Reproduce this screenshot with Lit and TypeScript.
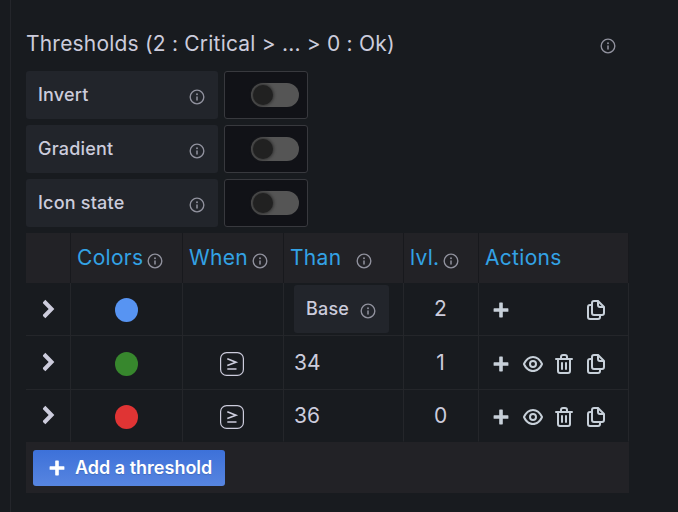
import { LitElement, html, css, svg, nothing } from "lit";
import { customElement, property } from "lit/decorators.js";

const ICONS: Record<string, string> = {
  info: "M12,2A10,10,0,1,0,22,12,10,10,0,0,0,12,2Zm0,18.2A8.2,8.2,0,1,1,20.2,12,8.2,8.2,0,0,1,12,20.200ZM12,11a1,1,0,0,0-1,1v4a1,1,0,0,0,2,0V12A1,1,0,0,0,12,11Zm0-4a1.250,1.250,0,1,0,1.250,1.250A1.250,1.250,0,0,0,12,7Z",
  eye: "M21.920,11.600C19.900,6.910,16.100,4,12,4S4.100,6.910,2.080,11.600a1,1,0,0,0,0,.8C4.100,17.090,7.900,20,12,20s7.900-2.910,9.920-7.600A1,1,0,0,0,21.920,11.600ZM12,18c-3.170,0-6.170-2.290-7.900-6C5.830,8.290,8.830,6,12,6s6.170,2.290,7.900,6C18.170,15.710,15.170,18,12,18ZM12,8a4,4,0,1,0,4,4A4,4,0,0,0,12,8Zm0,6a2,2,0,1,1,2-2A2,2,0,0,1,12,14Z",
  trash: "M10,18a1,1,0,0,0,1-1V11a1,1,0,0,0-2,0v6A1,1,0,0,0,10,18ZM20,6H16V5a3,3,0,0,0-3-3H11A3,3,0,0,0,8,5V6H4A1,1,0,0,0,4,8H5V19a3,3,0,0,0,3,3h8a3,3,0,0,0,3-3V8h1a1,1,0,0,0,0-2ZM10,5a1,1,0,0,1,1-1h2a1,1,0,0,1,1,1V6H10Zm7,14a1,1,0,0,1-1,1H8a1,1,0,0,1-1-1V8H17Zm-3-1a1,1,0,0,0,1-1V11a1,1,0,0,0-2,0v6A1,1,0,0,0,14,18Z",
  copy: "M21,8.940a1.310,1.310,0,0,0-.06-.27l0-.09a1.070,1.070,0,0,0-.19-.28h0l-6-6h0a1.070,1.070,0,0,0-.28-.19.320.320,0,0,0-.09,0A.88.88,0,0,0,14.050,2H10A3,3,0,0,0,7,5V6H6A3,3,0,0,0,3,9V19a3,3,0,0,0,3,3h8a3,3,0,0,0,3-3V18h1a3,3,0,0,0,3-3V9S21,9,21,8.940ZM15,5.410,17.590,8H16a1,1,0,0,1-1-1ZM15,19a1,1,0,0,1-1,1H6a1,1,0,0,1-1-1V9A1,1,0,0,1,6,8H7v7a3,3,0,0,0,3,3h5Zm4-4a1,1,0,0,1-1,1H10a1,1,0,0,1-1-1V5a1,1,0,0,1,1-1h3V7a3,3,0,0,0,3,3h3Z",
  plus: "M10.200,5.200a.6.6,0,0,1,.6-.6h2.400a.6.6,0,0,1,.6.6v5h5a.6.6,0,0,1,.6.6v2.400a.6.6,0,0,1-.6.6h-5v5a.6.6,0,0,1-.6.6h-2.400a.6.6,0,0,1-.6-.6v-5h-5a.6.6,0,0,1-.6-.6v-2.400a.6.6,0,0,1,.6-.6h5Z",
  chevron: "M7.600,4.500 L10.200,2 L20,12 L10.200,22 L7.600,19.500 L7.600,18.300 L13.800,12 L7.600,5.700Z",
};

@customElement("ui-icon")
class UiIcon extends LitElement {
  @property() name = "info";
  static styles = css`
    :host { display: block; flex: none; width: 24px; height: 24px; }
    svg { display: block; width: 100%; height: 100%; fill: currentColor; }
  `;
  render() {
    return html`<svg viewBox="0 0 24 24">${svg`<path d=${ICONS[this.name]}></path>`}</svg>`;
  }
}

interface Threshold { color: string; value?: string; level: string; }

const THRESHOLDS: Threshold[] = [
  { color: "#5794f2", level: "2" },
  { color: "#37872d", value: "34", level: "1" },
  { color: "#e03434", value: "36", level: "0" },
];

@customElement("app-root")
export class AppRoot extends LitElement {
  static styles = css`
    :host {
      display: block; box-sizing: border-box; height: 512px; overflow: hidden;
      background: #181b1f; color: #ccccdc;
      font: 400 21px/32px Inter, "Liberation Sans", sans-serif;
    }
    * { box-sizing: border-box; }
    .panel { height: 100%; margin-left: 10px; border-left: 1px solid #24262b; padding: 28px 49px 0 15px; }
    .title { display: flex; align-items: center; justify-content: space-between; height: 32px; margin-bottom: 11px; padding-right: 12px; letter-spacing: 0.2px; }
    .title .info { margin-top: 4px; }
    .info { width: 18px; height: 18px; color: #91929e; }
    .option { display: flex; gap: 6px; height: 48px; margin-bottom: 6px; }
    .label { display: flex; align-items: center; justify-content: space-between; background: #22252b; border-radius: 3px; padding: 0 12px; font-size: 18px; font-weight: 500; letter-spacing: 0.2px; }
    .label .info { margin-top: 3px; }
    .option .label { width: 192px; }
    .switch { display: flex; align-items: center; justify-content: flex-end; width: 84px; padding-right: 8px; background: #111217; border: 1px solid #38393e; border-radius: 3px; }
    .track { width: 48px; height: 24px; border-radius: 12px; background: #555; padding: 2px; }
    .knob { width: 20px; height: 20px; border-radius: 50%; background: #212121; box-shadow: 0 0 3px 1px #333; }
    .grid { display: grid; grid-template-columns: 45px 112px 101px 120px 75px 150px; grid-template-rows: 50px 53px 54px 52px 51px; width: 603px; }
    .cell { display: flex; align-items: center; justify-content: center; border-right: 1px solid #24262a; border-bottom: 1px solid #24262a; }
    .last { border-bottom-color: transparent; }
    .head { justify-content: flex-start; padding-left: 6px; background: #222226; color: #33a2e5; border-right-color: #18191d; border-bottom: 0; letter-spacing: 0.3px; }
    .head .info { margin: 5px 0 0 3px; }
    .head .spaced { margin-left: 14px; }
    .dot { width: 23px; height: 24px; border-radius: 50%; margin: 2px 1px 0 0; }
    .toggle { width: 22px; height: 22px; margin: 0 3px 1px 0; }
    .op { display: block; width: 24px; height: 24px; margin: 2px 2px 0 0; fill: none; stroke: #ccccdc; }
    .value { justify-content: flex-start; padding-left: 10px; }
    .base { width: 95px; height: 48px; }
    .level { padding-right: 1px; }
    .actions { display: grid; grid-template-columns: repeat(4, 24px); justify-content: start; gap: 7.600px; padding: 2px 0 0 10px; color: #c7d0d9; }
    .copy { grid-column: 4; }
    .foot { grid-column: 1 / -1; background: #222226; padding: 8px 7px; }
    .add { display: flex; align-items: center; gap: 6px; width: 192px; height: 36px; padding: 0 0 0 12px; border: 0; border-radius: 3px; background: linear-gradient(#3d71d9, #5785e0); color: #fff; font: 600 18px/36px Inter, "Liberation Sans", sans-serif; text-shadow: 0 1px 1px rgba(0,0,0,.15); white-space: nowrap; }
  `;

  private info(extra = "") {
    return html`<ui-icon class="info ${extra}" name="info"></ui-icon>`;
  }

  private row(t: Threshold, last: boolean) {
    const edge = last ? "last" : "";
    return html`
      <div class="cell ${edge}"><ui-icon class="toggle" name="chevron"></ui-icon></div>
      <div class="cell ${edge}"><span class="dot" style="background:${t.color}"></span></div>
      <div class="cell ${edge}">${t.value
        ? html`<svg class="op" viewBox="0 0 24 24"><rect x=".6" y=".6" width="22.800" height="22.800" rx="6" stroke-width="1.200"></rect><path d="M7.300 6.800L16 10.200L7.300 13.600M7.300 17H16.500" stroke-width="1.600"></path></svg>`
        : nothing}</div>
      <div class="cell value ${edge}">${t.value ?? html`<div class="label base">Base ${this.info()}</div>`}</div>
      <div class="cell level ${edge}">${t.level}</div>
      <div class="cell actions ${edge}">
        <ui-icon name="plus"></ui-icon>
        ${t.value ? html`<ui-icon name="eye"></ui-icon><ui-icon name="trash"></ui-icon>` : nothing}
        <ui-icon class="copy" name="copy"></ui-icon>
      </div>`;
  }

  render() {
    return html`<div class="panel">
      <div class="title"><span>Thresholds (2 : Critical &gt; ... &gt; 0 : Ok)</span>${this.info()}</div>
      ${["Invert", "Gradient", "Icon state"].map((name) => html`
        <div class="option">
          <div class="label">${name}${this.info()}</div>
          <div class="switch"><div class="track"><div class="knob"></div></div></div>
        </div>`)}
      <div class="grid">
        <div class="cell head"></div>
        <div class="cell head">Colors${this.info()}</div>
        <div class="cell head">When${this.info()}</div>
        <div class="cell head">Than${this.info("spaced")}</div>
        <div class="cell head">lvl.${this.info()}</div>
        <div class="cell head">Actions</div>
        ${THRESHOLDS.map((t, i) => this.row(t, i === THRESHOLDS.length - 1))}
        <div class="foot"><button class="add"><ui-icon name="plus"></ui-icon>Add a threshold</button></div>
      </div>
    </div>`;
  }
}
